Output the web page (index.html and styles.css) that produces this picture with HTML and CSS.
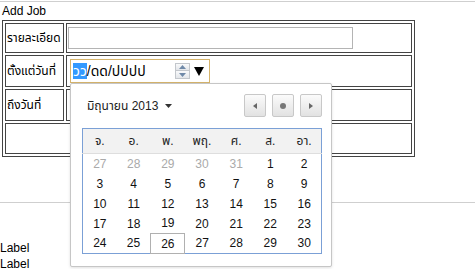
FILE: index.html
```html
<!DOCTYPE html>
<html lang="th">
<head>
    <meta charset="utf-8">
    <title>Add Job</title>
    <link rel="stylesheet" href="styles.css">
</head>
<body>

<div class="panel">
    <div class="panel-title">Add Job</div>
    <table class="job-form">
        <tr class="row-detail">
            <td class="label-cell">รายละเอียด</td>
            <td><input type="text" class="text-field"></td>
        </tr>
        <tr class="row-from">
            <td class="label-cell">ตั้งแต่วันที่</td>
            <td>
                <div class="date-field">
                    <span class="date-text"><span class="date-sel">วว</span>/ดด/ปปปป</span>
                    <span class="spin">
                        <span class="spin-btn"><svg width="7" height="4" viewBox="0 0 7 4"><polygon points="0,4 3.5,0 7,4" fill="#6f89a8"/></svg></span>
                        <span class="spin-btn"><svg width="7" height="4" viewBox="0 0 7 4"><polygon points="0,0 3.5,4 7,0" fill="#6f89a8"/></svg></span>
                    </span>
                    <svg class="drop" width="10" height="9" viewBox="0 0 10 9"><polygon points="0,0 10,0 5,9" fill="#000"/></svg>

                    <div class="date-popup">
                        <div class="cal-head">
                            <span class="cal-title">มิถุนายน 2013 <svg width="7" height="4" viewBox="0 0 7 4"><polygon points="0,0 7,0 3.5,4" fill="#333"/></svg></span>
                            <span class="cal-nav">
                                <span class="nav-btn"><svg width="4" height="6" viewBox="0 0 4 6"><polygon points="4,0 0,3 4,6" fill="#666"/></svg></span>
                                <span class="nav-btn"><svg width="6" height="6" viewBox="0 0 6 6"><circle cx="3" cy="3" r="3" fill="#777"/></svg></span>
                                <span class="nav-btn"><svg width="4" height="6" viewBox="0 0 4 6"><polygon points="0,0 4,3 0,6" fill="#666"/></svg></span>
                            </span>
                        </div>
                        <table class="cal-grid">
                            <thead>
                                <tr><th>จ.</th><th>อ.</th><th>พ.</th><th>พฤ.</th><th>ศ.</th><th>ส.</th><th>อา.</th></tr>
                            </thead>
                            <tbody>
                                <tr><td class="other">27</td><td class="other">28</td><td class="other">29</td><td class="other">30</td><td class="other">31</td><td>1</td><td>2</td></tr>
                                <tr><td>3</td><td>4</td><td>5</td><td>6</td><td>7</td><td>8</td><td>9</td></tr>
                                <tr><td>10</td><td>11</td><td>12</td><td>13</td><td>14</td><td>15</td><td>16</td></tr>
                                <tr><td>17</td><td>18</td><td>19</td><td>20</td><td>21</td><td>22</td><td>23</td></tr>
                                <tr><td>24</td><td>25</td><td class="today">26</td><td>27</td><td>28</td><td>29</td><td>30</td></tr>
                            </tbody>
                        </table>
                    </div>
                </div>
            </td>
        </tr>
        <tr class="row-to">
            <td class="label-cell">ถึงวันที่</td>
            <td></td>
        </tr>
        <tr class="row-save">
            <td colspan="2"></td>
        </tr>
    </table>
</div>

<div class="labels">
    <div>Label</div>
    <div>Label</div>
</div>

</body>
</html>
```

FILE: styles.css
```css
body {
    margin: 0;
    font-family: "Liberation Sans", "Noto Sans", "Noto Sans Thai", sans-serif;
    font-size: 12px;
    color: #000;
    background: #fff;
}
.panel {
    margin-top: 1px;
    height: 200px;
    padding-left: 2px;
    border-top: 1px solid #cfcfcf;
    border-bottom: 1px solid #cfcfcf;
}
.panel-title {
    line-height: 18px;
}
.job-form {
    width: 413px;
    border: 1px solid #444;
    border-spacing: 2px;
}
.job-form > tbody > tr > td {
    box-sizing: border-box;
    border: 1px solid #444;
    padding: 1px;
    vertical-align: middle;
}
.job-form .label-cell {
    width: 59px;
    white-space: nowrap;
}
.row-detail > td {
    height: 30px;
}
.row-from > td {
    height: 32px;
}
.row-to > td {
    height: 32px;
}
.row-save > td {
    height: 31px;
}
.text-field {
    display: block;
    box-sizing: border-box;
    width: 285px;
    height: 22px;
    margin: 0;
    border: 1px solid #b4b4b4;
    padding: 0 2px;
    font: inherit;
}
.date-field {
    position: relative;
    box-sizing: border-box;
    display: flex;
    align-items: center;
    width: 140px;
    height: 24px;
    margin-left: 2px;
    padding-left: 2px;
    border: 1px solid #d6b46c;
    font-size: 14px;
}
.date-text {
    line-height: 17px;
    white-space: nowrap;
}
.date-sel {
    background: #3399ff;
    color: #fff;
}
.spin {
    display: flex;
    flex-direction: column;
    margin-left: auto;
    margin-right: 4px;
}
.spin-btn {
    box-sizing: border-box;
    display: flex;
    align-items: center;
    justify-content: center;
    width: 15px;
    height: 8px;
    border: 1px solid #c3c7cc;
    background: linear-gradient(#f9fafb, #e3e6ea);
}
.spin-btn + .spin-btn {
    border-top: none;
}
.drop {
    display: block;
    margin-right: 5px;
}
.date-popup {
    position: absolute;
    left: -1px;
    top: calc(100% + 1px);
    z-index: 2;
    box-sizing: border-box;
    width: 262px;
    height: 184px;
    padding: 10px 9px 11px 11px;
    background: #fff;
    border: 1px solid #c6c6c6;
    border-radius: 2px;
    box-shadow: 0 1px 3px rgba(0, 0, 0, 0.12);
    font-size: 12px;
}
.cal-head {
    display: flex;
    align-items: center;
    justify-content: space-between;
    height: 23px;
    margin-bottom: 11px;
}
.cal-title {
    padding-left: 5px;
    color: #222;
    white-space: nowrap;
}
.cal-title svg {
    margin-left: 3px;
    vertical-align: middle;
}
.cal-nav {
    display: flex;
    gap: 6px;
}
.nav-btn {
    box-sizing: border-box;
    display: flex;
    align-items: center;
    justify-content: center;
    width: 22px;
    height: 23px;
    border: 1px solid #c8c8c8;
    border-radius: 2px;
    background: linear-gradient(#fbfbfb, #e2e2e2);
}
.cal-grid {
    width: 240px;
    border-collapse: collapse;
    border: 1px solid #7ba0d6;
    table-layout: fixed;
}
.cal-grid th {
    height: 24px;
    padding: 0;
    background: #f2f2f2;
    border-bottom: 1px solid #dedede;
    font-weight: normal;
    color: #222;
    text-align: center;
}
.cal-grid td {
    box-sizing: border-box;
    height: 20px;
    padding: 0;
    text-align: center;
    color: #111;
}
.cal-grid td.other {
    color: #aaa;
}
.cal-grid td.today {
    border: 1px solid #b0b0b0;
}
.labels {
    margin-top: 37px;
    line-height: 16px;
}
```
